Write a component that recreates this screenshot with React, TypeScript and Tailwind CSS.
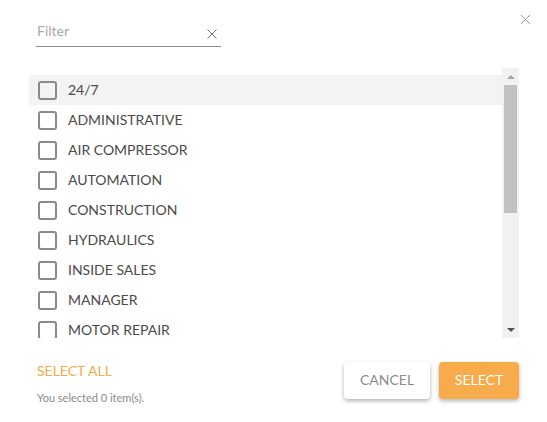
const items = [
  "24/7",
  "ADMINISTRATIVE",
  "AIR COMPRESSOR",
  "AUTOMATION",
  "CONSTRUCTION",
  "HYDRAULICS",
  "INSIDE SALES",
  "MANAGER",
  "MOTOR REPAIR",
]

function Checkbox() {
  return <span className="w-[19px] h-[19px] border-2 border-[#8a8a8a] rounded-[3px] shrink-0" />
}

export default function App() {
  return (
    <div
      className="relative w-[547px] h-[422px] bg-white text-[#4a4a4a]"
      style={{ fontFamily: "Lato, 'Open Sans', sans-serif" }}
    >
      <button className="absolute right-[16px] top-[14px] text-[#999]">
        <svg width="11" height="11" viewBox="0 0 11 11" stroke="currentColor" strokeWidth="1">
          <path d="M1 1l9 9M10 1l-9 9" />
        </svg>
      </button>

      <div className="pt-[21px] pl-[36px]">
        <div className="w-[185px] h-[26px] flex items-start border-b border-[#8c8c8c]">
          <span className="flex-1 pl-[1px] text-[14px] leading-[20px] text-[#aaa]">Filter</span>
          <svg className="mr-[4px] mt-[8px] text-[#777]" width="10" height="10" viewBox="0 0 10 10" stroke="currentColor" strokeWidth="1">
            <path d="M0.5 0.5l9 9M9.5 0.5l-9 9" />
          </svg>
        </div>
      </div>

      <div className="mt-[21px] ml-[29px] w-[490px] h-[270px] flex">
        <div className="flex-1 overflow-hidden pt-[7px]">
          {items.map((item, i) => (
            <div
              key={item}
              className={`h-[30px] flex items-center gap-[11px] pl-[9px] text-[14px] ${i === 0 ? "bg-[#f3f3f3]" : ""}`}
            >
              <Checkbox />
              <span className="-mt-[2px]">{item}</span>
            </div>
          ))}
        </div>
        <div className="w-[17px] bg-[#f1f1f1] flex flex-col items-center">
          <div className="h-[17px] w-full flex items-center justify-center">
            <span className="w-0 h-0 border-l-[4px] border-r-[4px] border-b-[4px] border-l-transparent border-r-transparent border-b-[#a3a3a3]" />
          </div>
          <div className="w-[13px] h-[128px] bg-[#c1c1c1]" />
          <div className="flex-1" />
          <div className="h-[17px] w-full flex items-center justify-center">
            <span className="w-0 h-0 border-l-[4px] border-r-[4px] border-t-[4px] border-l-transparent border-r-transparent border-t-[#505050]" />
          </div>
        </div>
      </div>

      <div className="mt-[24px] pr-[28px] pl-[37px] flex justify-between">
        <div className="flex flex-col">
          <span className="text-[14px] text-[#f7ab4a] leading-[17px]">SELECT ALL</span>
          <span className="mt-[12px] text-[11px] leading-[14px] text-[#8a8a8a]">You selected 0 item(s).</span>
        </div>
        <div className="flex gap-[9px]">
          <button className="w-[86px] h-[37px] pb-[3px] rounded-[4px] bg-white text-[14px] text-[#8c8c8c] shadow-[0_2px_4px_rgba(0,0,0,0.3)]">
            CANCEL
          </button>
          <button className="w-[80px] h-[37px] pb-[3px] rounded-[4px] bg-[#f7ab4a] text-[14px] text-white shadow-[0_2px_4px_rgba(0,0,0,0.3)]">
            SELECT
          </button>
        </div>
      </div>
    </div>
  )
}
